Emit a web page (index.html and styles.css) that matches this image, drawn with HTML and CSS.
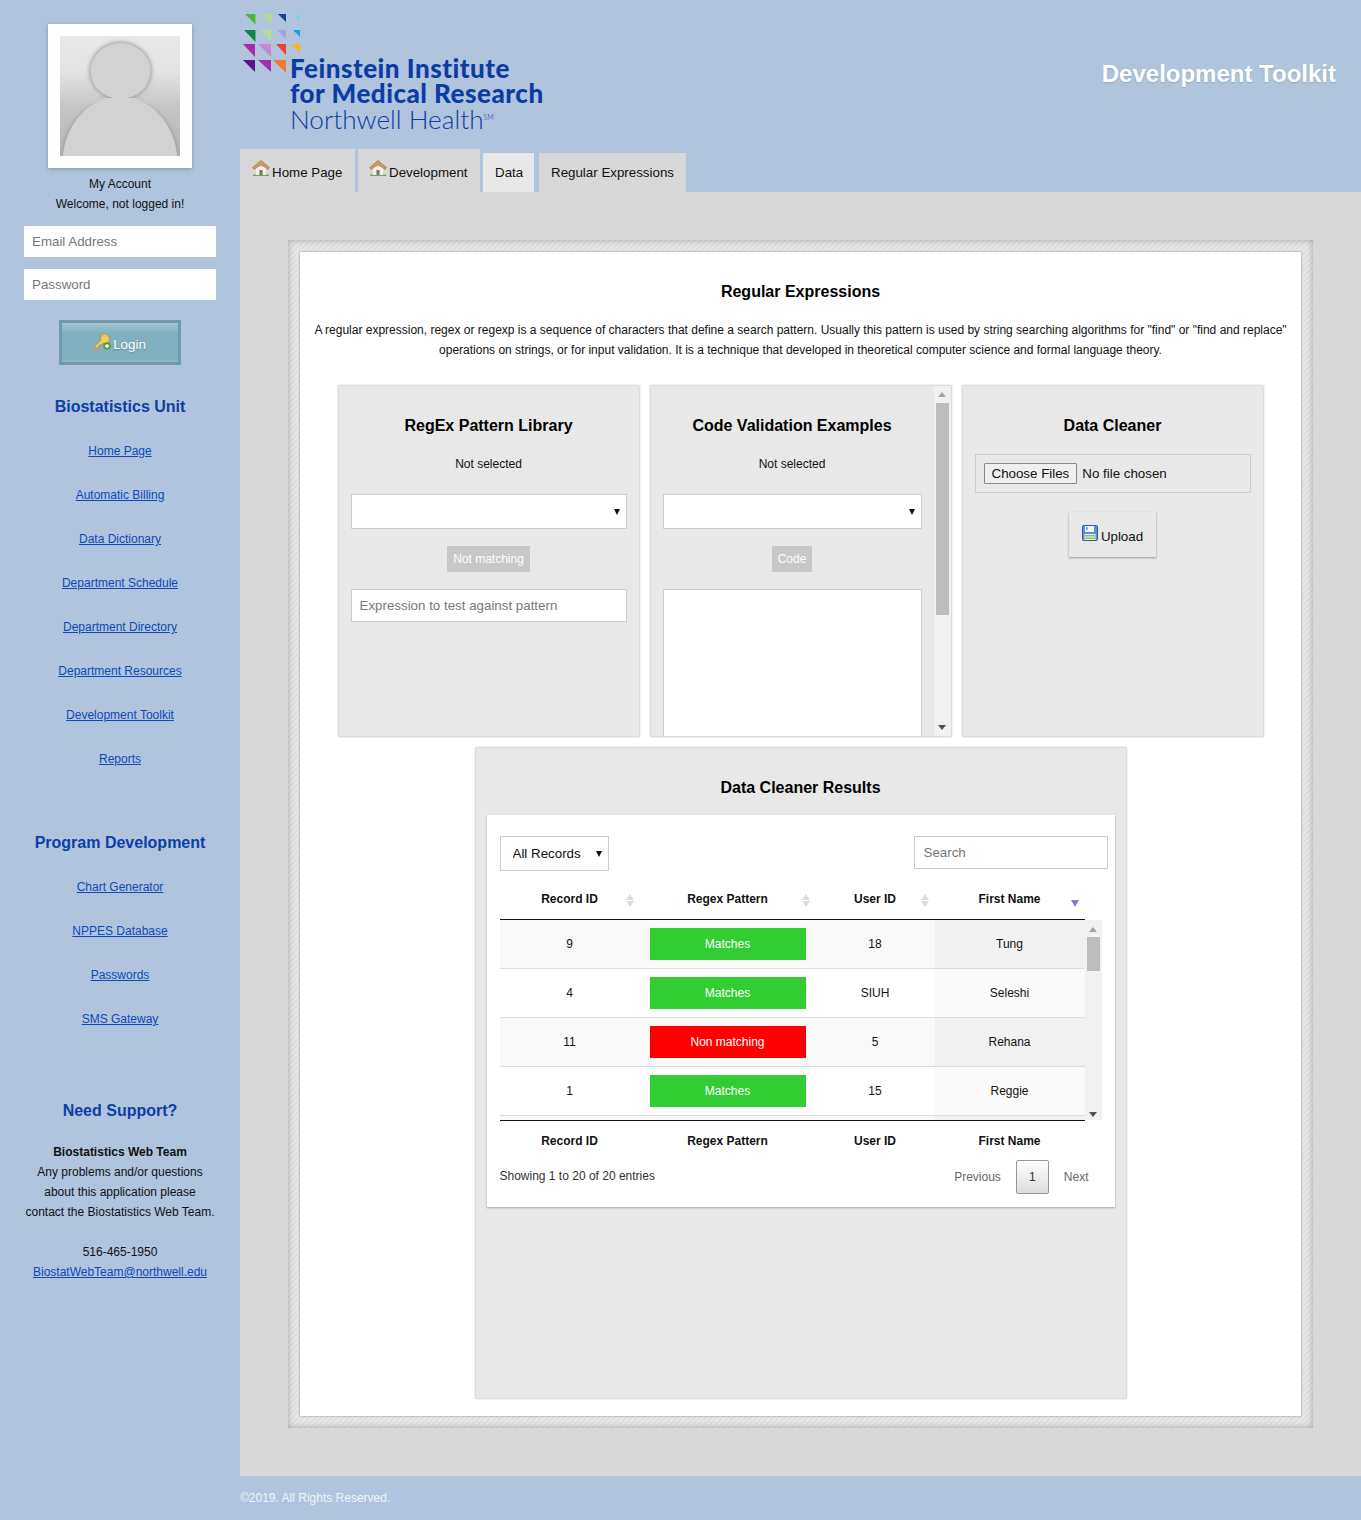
FILE: index.html
```html
<!DOCTYPE html>
<html lang="en">
<head>
    <meta charset="UTF-8">
    <meta name="viewport" content="width=device-width, initial-scale=1.0">
    <title>Development Toolkit - Regular Expressions</title>
    <link rel="stylesheet" href="styles.css">
</head>
<body>
    <svg class="icon-defs" width="0" height="0" aria-hidden="true">
        <defs>
            <symbol id="house" viewBox="0 0 18 16">
                <path d="M1 14.500h16V16H1z" fill="#6aa84f"/>
                <path d="M4 7h10v8H4z" fill="#f2f0e8"/>
                <path d="M7.400 10h3.200v5H7.400z" fill="#777"/>
                <path d="M9 .5 .5 7.500 2 9.500 9 4.500 16 9.500 17.500 7.500z" fill="#d19a58" stroke="#a06f35" stroke-width=".6"/>
            </symbol>
        </defs>
    </svg>
    <div class="layout">
        <aside class="sidebar">
            <div class="avatar">
                <svg width="120" height="120" viewBox="0 0 120 120" aria-label="Profile picture">
                    <defs>
                        <linearGradient id="avatarBg" x1="0" y1="0" x2="0" y2="1">
                            <stop offset="0" stop-color="#e8e8e8"/>
                            <stop offset=".3" stop-color="#e3e3e3"/>
                            <stop offset=".6" stop-color="#c4c4c4"/>
                            <stop offset="1" stop-color="#b4b4b4"/>
                        </linearGradient>
                        <filter id="avatarBlur" x="-20%" y="-20%" width="140%" height="140%">
                            <feGaussianBlur stdDeviation="2"/>
                        </filter>
                    </defs>
                    <rect width="120" height="120" fill="url(#avatarBg)"/>
                    <g fill="#9c9c9c" filter="url(#avatarBlur)">
                        <ellipse cx="60.500" cy="35" rx="31" ry="29"/>
                        <path d="M2 120C4 88 28 64 60 62c32 2 56 26 58 58z"/>
                    </g>
                    <g fill="#d2d2d2">
                        <ellipse cx="60.500" cy="35" rx="30" ry="28"/>
                        <path d="M3 120C5 90 26 68 46 62h28c20 6 41 28 43 58z"/>
                    </g>
                </svg>
            </div>
            <p class="account-line">My Account</p>
            <p class="account-line">Welcome, not logged in!</p>
            <form class="login-form">
                <input class="login-input" type="text" placeholder="Email Address">
                <input class="login-input" type="password" placeholder="Password">
                <button class="login-btn" type="button">
                    <svg width="17" height="17" viewBox="0 0 17 17" aria-hidden="true">
                        <path d="M10.500 1a5 5 0 0 1 3.600 8.400 5 5 0 0 1-5.600 1L7 12H5v2H3v2H1v-3l5.800-5.600A5 5 0 0 1 10.500 1z" fill="#f3cf62" stroke="#c9952c"/>
                        <circle cx="11.500" cy="4.500" r="1.300" fill="#fff3c0" stroke="#c9952c" stroke-width=".6"/>
                        <circle cx="13" cy="13" r="3.800" fill="#5c9a35"/>
                        <path d="M11 12.300h1.300V11h1.400v1.300H15v1.400h-1.300V15h-1.400v-1.300H11z" fill="#fff"/>
                    </svg>
                    Login
                </button>
            </form>

            <h3 class="side-heading side-heading-first">Biostatistics Unit</h3>
            <nav class="side-links">
                <a href="#">Home Page</a>
                <a href="#">Automatic Billing</a>
                <a href="#">Data Dictionary</a>
                <a href="#">Department Schedule</a>
                <a href="#">Department Directory</a>
                <a href="#">Department Resources</a>
                <a href="#">Development Toolkit</a>
                <a href="#">Reports</a>
            </nav>

            <h3 class="side-heading side-heading-program">Program Development</h3>
            <nav class="side-links">
                <a href="#">Chart Generator</a>
                <a href="#">NPPES Database</a>
                <a href="#">Passwords</a>
                <a href="#">SMS Gateway</a>
            </nav>

            <h3 class="side-heading side-heading-support">Need Support?</h3>
            <div class="support">
                <strong>Biostatistics Web Team</strong><br>
                Any problems and/or questions<br>
                about this application please<br>
                contact the Biostatistics Web Team.
            </div>
            <div class="support support-contact">
                516-465-1950<br>
                <a href="#">BiostatWebTeam@northwell.edu</a>
            </div>
        </aside>

        <div class="main">
            <header class="top">
                <div class="top-row">
                    <div class="logo">
                        <svg class="logo-marks" width="60" height="60" viewBox="240 13 60 60" aria-hidden="true">
                            <path fill="#4cb53f" d="M245 14h10.500v10.500z"/>
                            <path fill="#b5d98a" d="M262 14h9.500v10.500z"/>
                            <path fill="#12439c" d="M278 14h8v8z"/>
                            <path fill="#7fcfe6" d="M293 15h7v7z"/>
                            <path fill="#0a8a45" d="M244 30h11.500v12z"/>
                            <path fill="#b9df85" d="M261 30h10v11z"/>
                            <path fill="#a7a4dc" d="M277 30h9v9z"/>
                            <path fill="#16a4df" d="M293 30h8v8z"/>
                            <path fill="#a42cb0" d="M243 44h12v13z"/>
                            <path fill="#c48ad2" d="M258 44h13v13z"/>
                            <path fill="#e9432f" d="M276 44h10v11z"/>
                            <path fill="#fbb50f" d="M291 44h9v9z"/>
                            <path fill="#5f1186" d="M243 60h12v12z"/>
                            <path fill="#a42cb0" d="M258 60h13v12z"/>
                            <path fill="#f47a2a" d="M273 60h13v13z"/>
                        </svg>
                        <div class="logo-text">
                            <div class="logo-bold">Feinstein Institute</div>
                            <div class="logo-bold">for Medical Research</div>
                            <div class="logo-light">Northwell Health<sup>SM</sup></div>
                        </div>
                    </div>
                    <div class="site-title">Development Toolkit</div>
                </div>
                <nav class="tabs">
                    <a class="tab tab-tall tab-home" href="#"><svg class="tab-icon" width="18" height="16"><use href="#house"/></svg>Home Page</a>
                    <a class="tab tab-tall tab-dev" href="#"><svg class="tab-icon" width="18" height="16"><use href="#house"/></svg>Development</a>
                    <a class="tab tab-data" href="#">Data</a>
                    <a class="tab tab-regex" href="#">Regular Expressions</a>
                </nav>
            </header>

            <main class="content">
                <div class="frame">
                    <div class="frame-inner">
                        <h2 class="page-title">Regular Expressions</h2>
                        <p class="intro">A regular expression, regex or regexp is a sequence of characters that define a search pattern. Usually this pattern is used by string searching algorithms for "find" or "find and replace" operations on strings, or for input validation. It is a technique that developed in theoretical computer science and formal language theory.</p>

                        <div class="panels">
                            <section class="panel">
                                <div class="panel-body">
                                    <h3 class="panel-title">RegEx Pattern Library</h3>
                                    <p class="panel-status">Not selected</p>
                                    <div class="select-wrap"><select class="panel-select"><option></option></select></div>
                                    <div class="tag-row"><span class="tag">Not matching</span></div>
                                    <input class="test-input" type="text" placeholder="Expression to test against pattern">
                                </div>
                            </section>
                            <section class="panel">
                                <div class="panel-body">
                                    <h3 class="panel-title">Code Validation Examples</h3>
                                    <p class="panel-status">Not selected</p>
                                    <div class="select-wrap"><select class="panel-select"><option></option></select></div>
                                    <div class="tag-row"><span class="tag">Code</span></div>
                                    <div class="code-box"></div>
                                </div>
                                <div class="scrollbar scrollbar-panel">
                                    <span class="arrow-up"></span>
                                    <span class="thumb"></span>
                                    <span class="arrow-down"></span>
                                </div>
                            </section>
                            <section class="panel">
                                <div class="panel-body">
                                    <h3 class="panel-title">Data Cleaner</h3>
                                    <div class="file-box"><input class="file-input" type="file" multiple></div>
                                    <div class="upload-row">
                                        <button class="upload-btn" type="button">
                                            <svg class="upload-icon" width="16" height="16" viewBox="0 0 16 16" aria-hidden="true">
                                                <rect x=".5" y=".5" width="15" height="15" rx="1" fill="#5b8fd6" stroke="#2f5f9e"/>
                                                <rect x="3" y="1" width="9" height="6" fill="#f1f5fb"/>
                                                <rect x="4" y="2" width="1.500" height="3" fill="#5b8fd6"/>
                                                <rect x="2.500" y="9" width="11" height="6" fill="#f2f6ee"/>
                                                <rect x="3" y="10" width="10" height="1.500" fill="#8ec26a"/>
                                                <rect x="3" y="12.500" width="10" height="1.500" fill="#8ec26a"/>
                                            </svg>
                                            Upload
                                        </button>
                                    </div>
                                </div>
                            </section>
                        </div>

                        <section class="results">
                            <h3 class="panel-title">Data Cleaner Results</h3>
                            <div class="results-card">
                                <div class="table-tools">
                                    <div class="select-wrap select-wrap-small"><select class="length-select"><option>All Records</option></select></div>
                                    <input class="search-input" type="text" placeholder="Search">
                                </div>

                                <table class="grid grid-head">
                                    <colgroup><col class="col-id"><col class="col-regex"><col class="col-user"><col class="col-name"></colgroup>
                                    <thead>
                                        <tr>
                                            <th>Record ID<span class="sort"></span></th>
                                            <th>Regex Pattern<span class="sort"></span></th>
                                            <th>User ID<span class="sort"></span></th>
                                            <th>First Name<span class="sort-active"></span></th>
                                        </tr>
                                    </thead>
                                </table>

                                <div class="grid-scroll">
                                    <div class="grid-clip">
                                        <table class="grid grid-body">
                                            <colgroup><col class="col-id"><col class="col-regex"><col class="col-user"><col class="col-name"></colgroup>
                                            <tbody>
                                                <tr class="odd"><td>9</td><td><span class="result result-ok">Matches</span></td><td>18</td><td class="sorted">Tung</td></tr>
                                                <tr><td>4</td><td><span class="result result-ok">Matches</span></td><td>SIUH</td><td class="sorted">Seleshi</td></tr>
                                                <tr class="odd"><td>11</td><td><span class="result result-bad">Non matching</span></td><td>5</td><td class="sorted">Rehana</td></tr>
                                                <tr><td>1</td><td><span class="result result-ok">Matches</span></td><td>15</td><td class="sorted">Reggie</td></tr>
                                                <tr class="odd"><td></td><td></td><td></td><td class="sorted"></td></tr>
                                            </tbody>
                                        </table>
                                    </div>
                                    <div class="scrollbar scrollbar-table">
                                        <span class="arrow-up"></span>
                                        <span class="thumb"></span>
                                        <span class="arrow-down"></span>
                                    </div>
                                </div>

                                <table class="grid grid-foot">
                                    <colgroup><col class="col-id"><col class="col-regex"><col class="col-user"><col class="col-name"></colgroup>
                                    <tfoot>
                                        <tr><th>Record ID</th><th>Regex Pattern</th><th>User ID</th><th>First Name</th></tr>
                                    </tfoot>
                                </table>

                                <div class="table-info">
                                    <span class="showing">Showing 1 to 20 of 20 entries</span>
                                    <div class="pager">
                                        <a class="pager-link" href="#">Previous</a>
                                        <a class="pager-current" href="#">1</a>
                                        <a class="pager-link" href="#">Next</a>
                                    </div>
                                </div>
                            </div>
                        </section>
                    </div>
                </div>
            </main>

            <footer class="foot">©2019. All Rights Reserved.</footer>
        </div>
    </div>
</body>
</html>
```

FILE: styles.css
```css
* {
    box-sizing: border-box;
}
html, body {
    margin: 0;
    padding: 0;
}
body {
    font-family: "Liberation Sans", Arial, sans-serif;
    font-size: 12px;
    color: #000;
    background-color: #b0c4de;
    height: 1520px;
    overflow: hidden;
}
.icon-defs {
    display: block;
    height: 0;
}
.layout {
    display: flex;
    height: 1520px;
}

/* sidebar */
.sidebar {
    width: 240px;
    flex: none;
    padding: 24px 24px 0;
    text-align: center;
}
.avatar {
    width: 144px;
    height: 144px;
    margin: 0 auto 6px;
    padding: 12px;
    background: #fff;
    box-shadow: 0 1px 4px rgba(0, 0, 0, 0.25);
}
.avatar svg {
    display: block;
}
.account-line {
    margin: 0;
    line-height: 20px;
    color: #111;
}
.login-form {
    display: flex;
    flex-direction: column;
    align-items: center;
    margin-top: 12px;
}
.login-input {
    width: 192px;
    height: 31px;
    margin-bottom: 12px;
    padding: 0 8px 1px;
    border: none;
    background: #fff;
    font: 13.33px "Liberation Sans", Arial, sans-serif;
}
.login-input::placeholder,
.test-input::placeholder,
.search-input::placeholder {
    color: #777;
    opacity: 1;
}
.login-btn {
    width: 122px;
    height: 45px;
    margin-top: 8px;
    padding-top: 4px;
    border: 3px solid #6f9ba9;
    background: linear-gradient(#a3c5cf 0, #7fb0bd 10px, #7fb0bd 36px, #8fbac5 100%);
    color: #fff;
    font: 13.33px "Liberation Sans", Arial, sans-serif;
    display: flex;
    align-items: center;
    justify-content: center;
    gap: 2px;
    text-shadow: 0 1px 1px rgba(0, 0, 0, 0.2);
}
.login-btn svg {
    margin-top: -6px;
}
.side-heading {
    margin: 0;
    font-size: 16px;
    line-height: 20px;
    font-weight: bold;
    color: #0b3fa5;
}
.side-heading-first {
    margin-top: 32px;
}
.side-heading-program {
    margin-top: 66px;
}
.side-heading-support {
    margin-top: 74px;
}
.side-links {
    display: flex;
    flex-direction: column;
    align-items: center;
    margin-top: -2px;
}
.side-links a {
    margin-top: 29px;
    line-height: 15px;
    color: #0b4ab8;
    white-space: nowrap;
}
.support {
    margin-top: 21px;
    margin-left: -10px;
    margin-right: -10px;
    line-height: 20px;
    color: #111;
    white-space: nowrap;
}
.support-contact {
    margin-top: 20px;
}
.support a {
    color: #0b4ab8;
}

/* header */
.main {
    flex: 1;
    min-width: 0;
    display: flex;
    flex-direction: column;
}
.top {
    height: 192px;
    display: flex;
    flex-direction: column;
    justify-content: space-between;
}
.top-row {
    display: flex;
    justify-content: space-between;
}
.logo {
    padding-top: 13px;
}
.logo-marks {
    display: block;
}
.logo-text {
    margin: -17px 0 0 50px;
    color: #0a3ca3;
}
.logo-bold {
    font-family: Lato, "Liberation Sans", sans-serif;
    font-size: 26px;
    line-height: 25px;
    font-weight: 900;
    letter-spacing: 0.5px;
    white-space: nowrap;
}
.logo-light {
    font-family: Lato, "Liberation Sans", sans-serif;
    font-size: 26.2px;
    line-height: 26px;
    font-weight: 300;
    white-space: nowrap;
}
.logo-light sup {
    font-size: 7px;
    vertical-align: 9px;
    line-height: 0;
}
.site-title {
    margin: 59px 25px 0 0;
    font-size: 24px;
    line-height: 30px;
    font-weight: bold;
    color: #fff;
    text-shadow: 0 1px 2px rgba(0, 0, 0, 0.15);
}
.tabs {
    display: flex;
    align-items: flex-end;
    height: 43px;
}
.tab {
    display: block;
    height: 39px;
    padding-top: 11px;
    font-size: 13.33px;
    line-height: 18px;
    color: #111;
    text-decoration: none;
    background: #d8d8d8;
    white-space: nowrap;
}
.tab-tall {
    height: 43px;
    padding-top: 15px;
}
.tab-home {
    width: 115px;
    padding-left: 12px;
    margin-right: 3px;
}
.tab-dev {
    width: 122px;
    padding-left: 11px;
    margin-right: 3px;
}
.tab-data {
    width: 51px;
    padding-left: 12px;
    margin-right: 5px;
    background: #e8e8e8;
}
.tab-regex {
    width: 147px;
    padding-left: 12px;
}
.tab-icon {
    vertical-align: -1px;
    margin-top: -6px;
    margin-right: 2px;
    position: relative;
    top: -2px;
}

/* content */
.content {
    height: 1284px;
    padding: 48px;
    background: #d8d8d8;
}
.frame {
    height: 1188px;
    padding: 12px;
    background: repeating-linear-gradient(-45deg, #dfdfdf 0, #dfdfdf 2px, #e7e7e7 2px, #e7e7e7 4px);
    box-shadow: inset 0 0 6px rgba(0, 0, 0, 0.3);
}
.frame-inner {
    height: 1164px;
    padding-top: 30px;
    background: #fff;
    box-shadow: 0 0 2px rgba(0, 0, 0, 0.4);
}
.page-title {
    margin: 0;
    font-size: 16px;
    line-height: 20px;
    font-weight: bold;
    text-align: center;
}
.intro {
    width: 985px;
    margin: 18px auto 0;
    line-height: 20px;
    text-align: center;
    color: #111;
}
.panels {
    display: flex;
    justify-content: center;
    gap: 10px;
    margin-top: 25px;
}
.panel {
    display: flex;
    width: 302px;
    height: 352px;
    background: #e8e8e8;
    border: 1px solid #dcdcdc;
    border-radius: 2px;
    box-shadow: 0 0 2px rgba(0, 0, 0, 0.2);
    overflow: hidden;
}
.panel-body {
    flex: 1;
    min-width: 0;
    padding: 30px 12px 0;
}
.panel-title {
    margin: 0;
    font-size: 16px;
    line-height: 20px;
    font-weight: bold;
    text-align: center;
}
.panel-status {
    margin: 18px 0 0;
    line-height: 20px;
    text-align: center;
    color: #111;
}
.select-wrap {
    position: relative;
    margin-top: 20px;
}
.select-wrap::after {
    content: "";
    position: absolute;
    right: 7px;
    top: 50%;
    margin-top: -3px;
    border-left: 3px solid transparent;
    border-right: 3px solid transparent;
    border-top: 6px solid #111;
    pointer-events: none;
}
.panel-select,
.length-select {
    display: block;
    width: 100%;
    appearance: none;
    border: 1px solid #ccc;
    border-radius: 0;
    background: #fff;
    font: 13.33px "Liberation Sans", Arial, sans-serif;
}
.panel-select {
    height: 35px;
}
.tag-row {
    margin-top: 17px;
    text-align: center;
}
.tag {
    display: inline-block;
    height: 26px;
    padding: 0 6px;
    line-height: 26px;
    background: #c8c8c8;
    color: #fff;
}
.test-input {
    display: block;
    width: 100%;
    height: 33px;
    margin-top: 17px;
    padding: 0 8px;
    border: 1px solid #ccc;
    background: #fff;
    font: 13.33px "Liberation Sans", Arial, sans-serif;
}
.code-box {
    height: 200px;
    margin-top: 17px;
    border: 1px solid #ccc;
    background: #fff;
}
.scrollbar {
    flex: none;
    display: flex;
    flex-direction: column;
    align-items: center;
    background: #f1f1f1;
}
.scrollbar-panel {
    width: 17px;
    padding-top: 6px;
    padding-bottom: 6px;
}
.scrollbar .thumb {
    display: block;
    background: #bdbdbd;
}
.scrollbar-panel .thumb {
    width: 13px;
    height: 212px;
    margin-top: 6px;
}
.arrow-up {
    border-left: 4px solid transparent;
    border-right: 4px solid transparent;
    border-bottom: 5px solid #a3a3a3;
}
.arrow-down {
    margin-top: auto;
    border-left: 4px solid transparent;
    border-right: 4px solid transparent;
    border-top: 5px solid #505050;
}
.file-box {
    display: flex;
    align-items: center;
    height: 39px;
    margin-top: 18px;
    padding-left: 8px;
    border: 1px solid #ccc;
}
.file-input {
    font: 13.33px "Liberation Sans", Arial, sans-serif;
    color: #111;
    width: 260px;
}
.file-input::file-selector-button {
    height: 21px;
    margin-right: 5px;
    padding: 0 7px;
    border: 1px solid #8a8a8a;
    border-radius: 1px;
    background: #efefef;
    font: 13.33px "Liberation Sans", Arial, sans-serif;
    color: #111;
}
.upload-row {
    margin-top: 19px;
    text-align: center;
}
.upload-btn {
    display: inline-flex;
    align-items: center;
    justify-content: center;
    gap: 3px;
    width: 87px;
    height: 45px;
    padding-top: 4px;
    border: none;
    background: #e8e8e8;
    box-shadow: 0 1px 2px rgba(0, 0, 0, 0.35);
    font: 13.33px "Liberation Sans", Arial, sans-serif;
    color: #111;
}
.upload-icon {
    margin-top: -6px;
}

/* results table */
.results {
    width: 652px;
    height: 652px;
    margin: 10px auto 0;
    padding: 30px 11px 0;
    background: #e8e8e8;
    border: 1px solid #dcdcdc;
    border-radius: 2px;
    box-shadow: 0 0 2px rgba(0, 0, 0, 0.2);
}
.results-card {
    height: 392px;
    margin-top: 17px;
    padding: 21px 0 0 13px;
    background: #fff;
    box-shadow: 0 1px 2px rgba(0, 0, 0, 0.3);
}
.table-tools {
    display: flex;
    justify-content: space-between;
    align-items: flex-start;
}
.select-wrap-small {
    width: 109px;
    margin-top: 0;
}
.length-select {
    height: 35px;
    padding-left: 12px;
    color: #111;
}
.search-input {
    width: 194px;
    height: 33px;
    margin-right: 7px;
    padding: 0 9px;
    border: 1px solid #ccc;
    font: 13.33px "Liberation Sans", Arial, sans-serif;
}
.grid {
    width: 585px;
    table-layout: fixed;
    border-collapse: collapse;
}
.col-id {
    width: 140px;
}
.col-regex {
    width: 176px;
}
.col-user {
    width: 119px;
}
.col-name {
    width: 150px;
}
.grid th {
    font-weight: bold;
    text-align: center;
    padding: 0;
    color: #111;
    position: relative;
}
.grid-head {
    margin-top: 9px;
    border-bottom: 1px solid #111;
}
.grid-head th {
    height: 39px;
    padding-bottom: 1px;
}
.sort,
.sort-active {
    position: absolute;
    right: 5px;
    top: 14px;
    width: 10px;
    height: 13px;
}
.sort::before {
    content: "";
    position: absolute;
    left: 1px;
    top: 0;
    border-left: 4px solid transparent;
    border-right: 4px solid transparent;
    border-bottom: 6px solid #dcdcdc;
}
.sort::after {
    content: "";
    position: absolute;
    left: 1px;
    top: 7px;
    border-left: 4px solid transparent;
    border-right: 4px solid transparent;
    border-top: 6px solid #dcdcdc;
}
.sort-active {
    right: 4px;
}
.sort-active::after {
    content: "";
    position: absolute;
    left: 0;
    top: 6px;
    border-left: 4px solid transparent;
    border-right: 4px solid transparent;
    border-top: 7px solid #7f7fd8;
}
.grid-scroll {
    display: flex;
    height: 200px;
}
.grid-clip {
    width: 585px;
    height: 200px;
    overflow: hidden;
}
.grid-body td {
    height: 49px;
    padding: 0;
    text-align: center;
    color: #111;
    border-bottom: 1px solid #ddd;
    background: #fff;
}
.grid-body .odd td {
    background: #f9f9f9;
}
.grid-body td.sorted {
    background: #fafafa;
}
.grid-body .odd td.sorted {
    background: #f1f1f1;
}
.result {
    display: block;
    height: 32px;
    margin: 0 10px;
    line-height: 32px;
    color: #fff;
}
.result-ok {
    background: #32cd32;
}
.result-bad {
    background: #f00;
}
.scrollbar-table {
    width: 17px;
    height: 200px;
    padding: 7px 0 3px;
}
.scrollbar-table .thumb {
    width: 13px;
    height: 34px;
    margin-top: 5px;
}
.grid-foot {
    border-top: 1px solid #111;
}
.grid-foot th {
    height: 40px;
    padding-top: 1px;
}
.table-info {
    display: flex;
    justify-content: space-between;
    align-items: flex-start;
    width: 604px;
}
.showing {
    margin-top: 9px;
    line-height: 15px;
    color: #333;
}
.pager {
    display: flex;
    align-items: center;
}
.pager a {
    text-decoration: none;
}
.pager-link {
    padding: 0 15px;
    color: #666;
}
.pager-current {
    width: 33px;
    height: 34px;
    line-height: 32px;
    text-align: center;
    color: #333;
    border: 1px solid #979797;
    border-radius: 2px;
    background: linear-gradient(#fff, #dcdcdc);
}

.foot {
    flex: 1;
    padding-top: 15px;
    line-height: 14px;
    color: #f2f4f8;
}
```
